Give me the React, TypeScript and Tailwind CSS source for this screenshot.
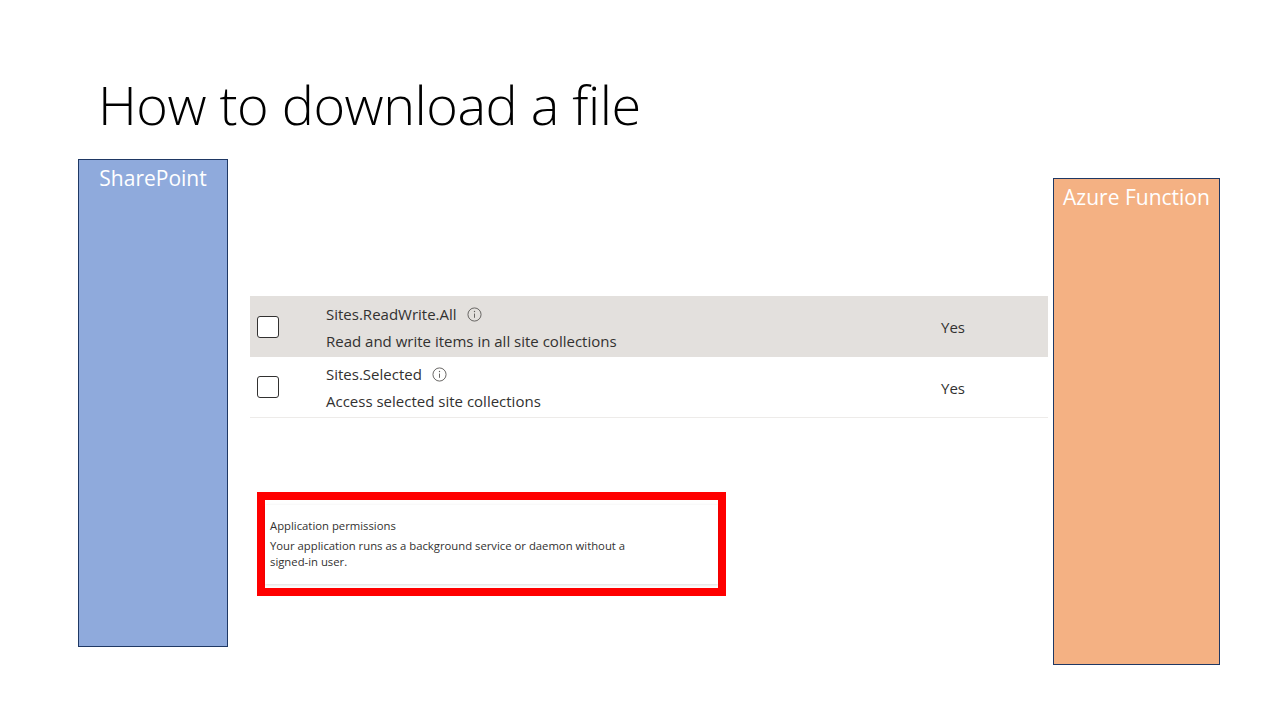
import React from "react";

const InfoIcon = () => (
  <svg width="15" height="15" viewBox="0 0 16 16" fill="none" className="ml-[10px]">
    <circle cx="8" cy="8" r="7" stroke="#605e5c" strokeWidth="1" />
    <line x1="8" y1="7" x2="8" y2="11.5" stroke="#605e5c" strokeWidth="1" />
    <circle cx="8" cy="4.8" r="0.7" fill="#605e5c" />
  </svg>
);

const Checkbox = () => (
  <div className="w-[22px] h-[22px] rounded-[3px] border-[1.5px] border-[#323130] bg-white shrink-0" />
);

function Row({ name, desc, shaded }: { name: string; desc: string; shaded?: boolean }) {
  return (
    <div
      className={`flex items-center h-[61px] pl-[7px] ${shaded ? "bg-[#e3e0dd]" : "bg-white border-b border-[#edebe9]"}`}
    >
      <Checkbox />
      <div className="ml-[47px] w-[615px] flex flex-col text-[15px] leading-[27px] text-[#323130] pt-[2px]">
        <div className="flex items-center">
          <span>{name}</span>
          <InfoIcon />
        </div>
        <span>{desc}</span>
      </div>
      <span className="text-[15px] text-[#323130] pt-[2px]">Yes</span>
    </div>
  );
}

export default function App() {
  return (
    <div
      className="w-[1280px] h-[720px] bg-white overflow-hidden"
      style={{ fontFamily: '"Open Sans", "Noto Sans", sans-serif' }}
    >
      <div className="h-[159px] pl-[98px] pt-[72px]">
        <h1 className="text-[54px] leading-[64px] font-light text-black tracking-[-0.5px]">
          How to download a file
        </h1>
      </div>
      <div className="flex pl-[78px]">
        <div className="w-[150px] h-[488px] bg-[#8faadc] border border-[#1f3864] flex justify-center">
          <span className="text-white text-[21px] leading-[36px]">SharePoint</span>
        </div>
        <div className="ml-[22px] w-[798px] flex flex-col">
          <div className="mt-[137px]">
            <Row name="Sites.ReadWrite.All" desc="Read and write items in all site collections" shaded />
            <Row name="Sites.Selected" desc="Access selected site collections" />
          </div>
          <div className="mt-[74px] ml-[7px] w-[469px] h-[104px] border-[8px] border-[#ff0000] bg-white pt-[5px]">
            <div className="h-[79px] bg-white shadow-[0_1px_3px_rgba(0,0,0,0.15)] pl-[5px] pt-[12px] text-[#323130]">
              <div className="text-[11.3px] leading-[17px]">Application permissions</div>
              <div className="mt-[4px] text-[11.3px] leading-[16px] w-[390px]">
                Your application runs as a background service or daemon without a signed-in user.
              </div>
            </div>
          </div>
        </div>
        <div className="ml-[5px] mt-[19px] w-[167px] h-[487px] bg-[#f4b183] border border-[#1f3864] flex justify-center">
          <span className="text-white text-[21px] leading-[36px]">Azure Function</span>
        </div>
      </div>
    </div>
  );
}
